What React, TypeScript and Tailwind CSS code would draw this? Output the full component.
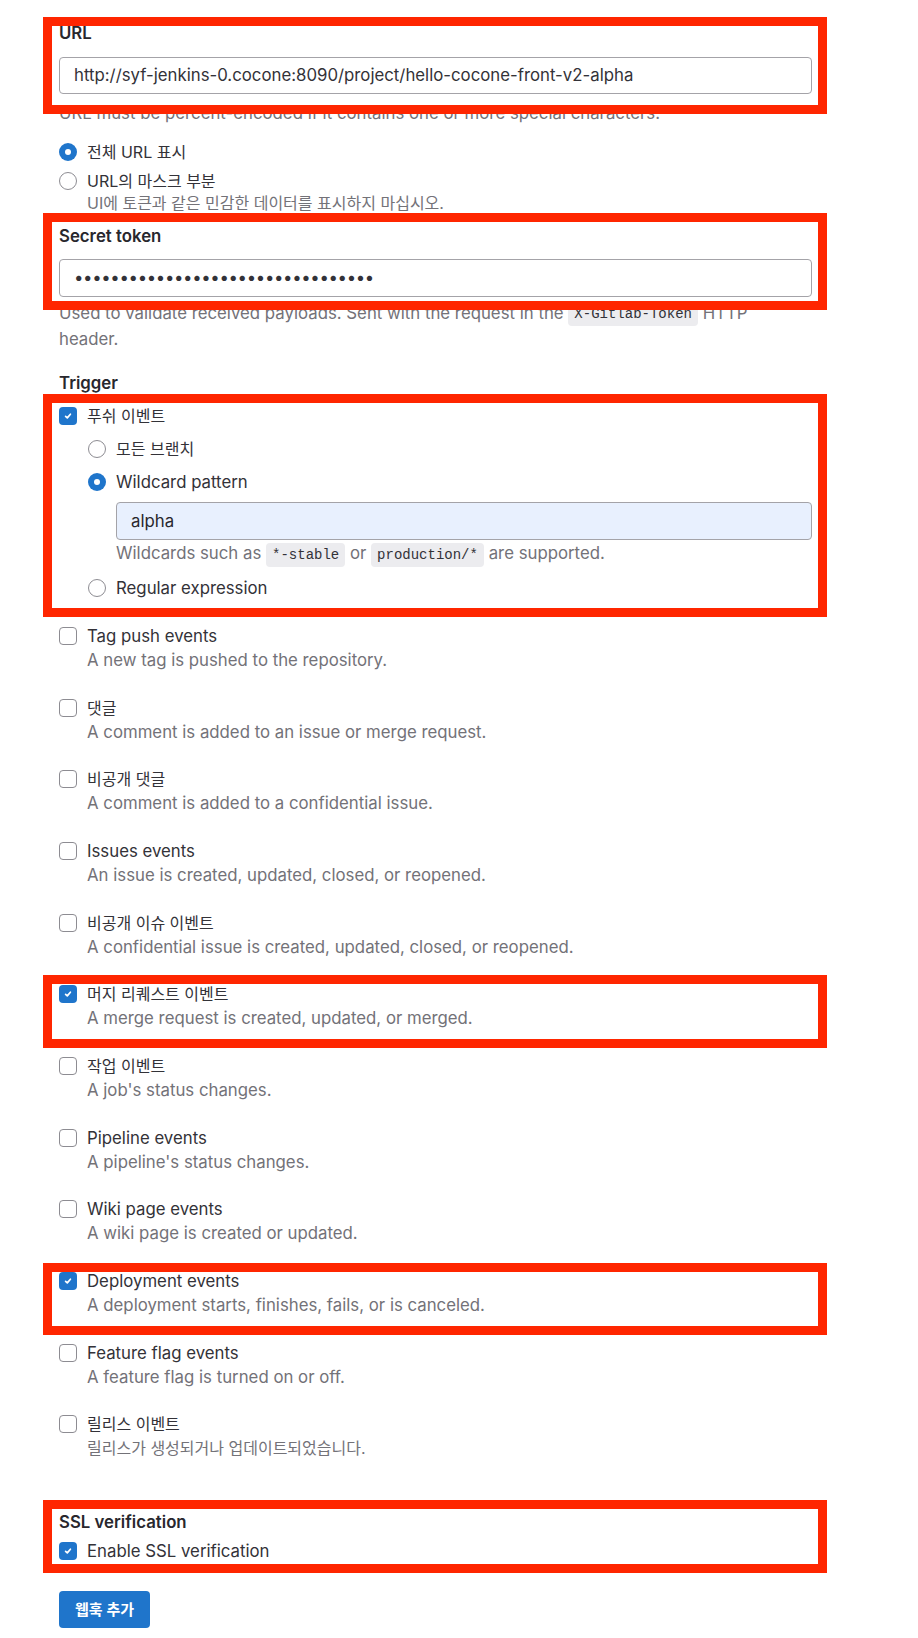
import React from "react";

const FONT = { fontFamily: 'Inter, "Noto Sans CJK KR", "Noto Sans", sans-serif' };
const MONO = { fontFamily: '"Liberation Mono", "DejaVu Sans Mono", monospace' };

function Checkbox({ checked }: { checked?: boolean }) {
  if (checked) {
    return (
      <span className="w-[18px] h-[18px] rounded-[4px] bg-[#1f75cb] shrink-0 flex items-center justify-center">
        <svg width="10" height="10" viewBox="0 0 10 10">
          <path d="M2.6 5.3 L4.3 6.9 L7.4 3.2" stroke="white" strokeWidth="1.7" fill="none" strokeLinecap="round" strokeLinejoin="round" />
        </svg>
      </span>
    );
  }
  return <span className="w-[18px] h-[18px] rounded-[4px] border border-[#8d8c92] bg-white shrink-0" />;
}

function Radio({ checked }: { checked?: boolean }) {
  if (checked) {
    return (
      <span className="w-[18px] h-[18px] rounded-full bg-[#1f75cb] shrink-0 flex items-center justify-center">
        <span className="w-[6px] h-[6px] rounded-full bg-white" />
      </span>
    );
  }
  return <span className="w-[18px] h-[18px] rounded-full border border-[#8d8c92] bg-white shrink-0" />;
}

function Code({ children }: { children: React.ReactNode }) {
  return (
    <span className="inline-block bg-[#ececef] rounded-[4px] px-[6px] py-[2px] text-[14px] leading-[20px] text-[#333238] align-middle" style={MONO}>
      {children}
    </span>
  );
}

const events: { label: string; desc: string; checked?: boolean; ko?: boolean; koDesc?: boolean }[] = [
  { label: "Tag push events", desc: "A new tag is pushed to the repository." },
  { label: "댓글", desc: "A comment is added to an issue or merge request.", ko: true },
  { label: "비공개 댓글", desc: "A comment is added to a confidential issue.", ko: true },
  { label: "Issues events", desc: "An issue is created, updated, closed, or reopened." },
  { label: "비공개 이슈 이벤트", desc: "A confidential issue is created, updated, closed, or reopened.", ko: true },
  { label: "머지 리퀘스트 이벤트", desc: "A merge request is created, updated, or merged.", checked: true, ko: true },
  { label: "작업 이벤트", desc: "A job's status changes.", ko: true },
  { label: "Pipeline events", desc: "A pipeline's status changes." },
  { label: "Wiki page events", desc: "A wiki page is created or updated." },
  { label: "Deployment events", desc: "A deployment starts, finishes, fails, or is canceled.", checked: true },
  { label: "Feature flag events", desc: "A feature flag is turned on or off." },
  { label: "릴리스 이벤트", desc: "릴리스가 생성되거나 업데이트되었습니다.", ko: true, koDesc: true },
];

const boxes = [
  "top-[17px] h-[97px]",
  "top-[213px] h-[97px]",
  "top-[394px] h-[223px]",
  "top-[975px] h-[73px]",
  "top-[1263px] h-[72px]",
  "top-[1500px] h-[73px]",
];

export default function App() {
  return (
    <div className="relative w-full min-h-[1638px] bg-white text-[16.8px] text-[#333238] antialiased" style={FONT}>
      <div className="pl-[59px] w-[812px] pt-[21px] flex flex-col">
        {/* URL */}
        <div className="font-semibold leading-[24px] text-[#28272d]">URL</div>
        <div className="mt-[12px] h-[37px] border border-[#a4a3a8] rounded-[4px] flex items-center px-[14px] text-[#333238] whitespace-nowrap">
          http://syf-jenkins-0.cocone:8090/project/hello-cocone-front-v2-alpha
        </div>
        <div className="mt-[7px] leading-[24px] text-[#737278]">
          URL must be percent-encoded if it contains one or more special characters.
        </div>

        <div className="mt-[16px] flex items-center gap-[10px] leading-[22px] text-[16px]">
          <Radio checked />
          <span>전체 URL 표시</span>
        </div>
        <div className="mt-[7px] flex items-center gap-[10px] leading-[22px] text-[16px]">
          <Radio />
          <span>URL의 마스크 부분</span>
        </div>
        <div className="pl-[28px] leading-[22px] text-[16px] text-[#737278]">UI에 토큰과 같은 민감한 데이터를 표시하지 마십시오.</div>

        {/* Secret token */}
        <div className="mt-[10px] font-semibold leading-[24px] text-[#28272d]">Secret token</div>
        <div className="mt-[11px] h-[38px] border border-[#a4a3a8] rounded-[4px] flex items-center px-[14px] text-[#333238] whitespace-nowrap tracking-[-0.35px]">
          {"•".repeat(33)}
        </div>
        <div className="mt-[3px] w-[720px] leading-[26px] text-[#737278]">
          <span>Used to validate received payloads. Sent with the request in the</span>{" "}
          <Code>X-Gitlab-Token</Code> <span>HTTP</span>
          <br />
          <span>header.</span>
        </div>

        {/* Trigger */}
        <div className="mt-[19px] font-semibold leading-[24px] text-[#28272d]">Trigger</div>
        <div className="mt-[9px] flex items-center gap-[10px] leading-[24px] text-[16px]">
          <Checkbox checked />
          <span>푸쉬 이벤트</span>
        </div>
        <div className="pl-[29px] flex flex-col">
          <div className="mt-[9px] flex items-center gap-[10px] leading-[24px] text-[16px]">
            <Radio />
            <span>모든 브랜치</span>
          </div>
          <div className="mt-[9px] flex items-center gap-[10px] leading-[24px]">
            <Radio checked />
            <span>Wildcard pattern</span>
          </div>
          <div className="pl-[28px] flex flex-col">
            <div className="mt-[8px] h-[38px] border border-[#a4a3a8] bg-[#e8f0fe] rounded-[4px] flex items-center px-[14px] text-[#28272d]">
              alpha
            </div>
            <div className="mt-[1px] leading-[24px] text-[#737278]">
              <span>Wildcards such as</span> <Code>*-stable</Code> <span>or</span> <Code>production/*</Code>{" "}
              <span>are supported.</span>
            </div>
          </div>
          <div className="mt-[9px] flex items-center gap-[10px] leading-[24px]">
            <Radio />
            <span>Regular expression</span>
          </div>
        </div>

        {/* Events */}
        <div className="mt-[24px] flex flex-col gap-[23.7px]">
          {events.map((e) => (
            <div key={e.label} className="flex flex-col">
              <div className={`flex items-center gap-[10px] leading-[24px] ${e.ko ? "text-[16px]" : ""}`}>
                <Checkbox checked={e.checked} />
                <span>{e.label}</span>
              </div>
              <div className={`pl-[28px] leading-[24px] text-[#737278] ${e.koDesc ? "text-[16px]" : ""}`}>{e.desc}</div>
            </div>
          ))}
        </div>

        {/* SSL */}
        <div className="mt-[50px] font-semibold leading-[24px] text-[#28272d]">SSL verification</div>
        <div className="mt-[5px] flex items-center gap-[10px] leading-[24px]">
          <Checkbox checked />
          <span>Enable SSL verification</span>
        </div>
        <div className="mt-[28px]">
          <button className="h-[37px] w-[91px] rounded-[4px] bg-[#1f75cb] text-white text-[15px] font-semibold">
            웹훅 추가
          </button>
        </div>
      </div>

      {boxes.map((b) => (
        <div key={b} className={`absolute left-[43px] w-[784px] border-[9px] border-[#ff2600] pointer-events-none ${b}`} />
      ))}
    </div>
  );
}
